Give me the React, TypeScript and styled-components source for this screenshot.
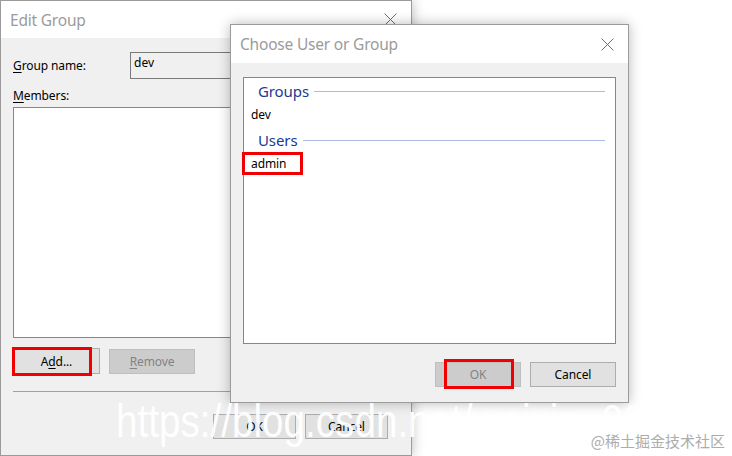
import React from "react";
import styled, { createGlobalStyle } from "styled-components";

const GlobalStyle = createGlobalStyle`
  html, body { margin: 0; padding: 0; background: #ffffff; }
  body { width: 732px; height: 456px; overflow: hidden; font-family: "Noto Sans", "Open Sans", sans-serif; }
`;

const Desktop = styled.div`
  position: relative;
  width: 732px;
  height: 456px;
  overflow: hidden;
  background: #ffffff;
`;

const Window = styled.div<{ $left: number; $top: number; $w: number; $h: number; $z: number }>`
  position: absolute;
  left: ${(p) => p.$left}px;
  top: ${(p) => p.$top}px;
  width: ${(p) => p.$w}px;
  height: ${(p) => p.$h}px;
  z-index: ${(p) => p.$z};
  box-sizing: border-box;
  border: 1px solid #9b9b9b;
  background: #f0f0f0;
  display: flex;
  flex-direction: column;
  box-shadow: 0 0 12px rgba(0, 0, 0, 0.28);
`;

const TitleBar = styled.div<{ $h: number }>`
  height: ${(p) => p.$h}px;
  flex: 0 0 auto;
  background: #ffffff;
  display: flex;
  align-items: center;
  justify-content: space-between;
  padding: 0 14px 0 9px;
`;

const Title = styled.span`
  font-size: 15.5px;
  color: #9b9b9b;
  letter-spacing: -0.2px;
`;

const CloseIcon = () => (
  <svg width="13" height="13" viewBox="0 0 13 13">
    <path d="M0.5 0.5 L12.5 12.5 M12.5 0.5 L0.5 12.5" stroke="#6f6f6f" strokeWidth="1" fill="none" />
  </svg>
);

const Body = styled.div<{ $pad: string }>`
  flex: 1;
  display: flex;
  flex-direction: column;
  padding: ${(p) => p.$pad};
  font-size: 12px;
  color: #000;
`;

const FieldRow = styled.div`
  display: flex;
  align-items: center;
`;

const Label = styled.span<{ $w?: number; $mt?: number }>`
  font-size: 12px;
  width: ${(p) => (p.$w ? `${p.$w}px` : "auto")};
  margin-top: ${(p) => p.$mt || 0}px;
  flex: 0 0 auto;
  letter-spacing: -0.1px;
`;

const U = styled.span`
  text-decoration: underline;
  text-underline-offset: 2px;
`;

const TextInput = styled.div`
  flex: 1;
  height: 27px;
  box-sizing: border-box;
  border: 1px solid #7a7a7a;
  background: #f0f0f0;
  padding: 1px 3px;
  font-size: 12px;
  line-height: 18px;
`;

const ListBox = styled.div<{ $h: number; $mt: number }>`
  height: ${(p) => p.$h}px;
  margin-top: ${(p) => p.$mt}px;
  box-sizing: border-box;
  border: 1px solid #828790;
  background: #ffffff;
  display: flex;
  flex-direction: column;
`;

const ButtonRow = styled.div<{ $mt: number; $justify?: string; $gap: number; $pr?: number; $align?: string }>`
  display: flex;
  align-items: ${(p) => p.$align || "flex-start"};
  margin-top: ${(p) => p.$mt}px;
  justify-content: ${(p) => p.$justify || "flex-start"};
  gap: ${(p) => p.$gap}px;
  padding-right: ${(p) => p.$pr || 0}px;
`;

const Button = styled.div<{ $disabled?: boolean; $w: number; $h: number }>`
  position: relative;
  width: ${(p) => p.$w}px;
  height: ${(p) => p.$h}px;
  box-sizing: border-box;
  border: 1px solid ${(p) => (p.$disabled ? "#bfbfbf" : "#adadad")};
  background: ${(p) => (p.$disabled ? "#cccccc" : "#e1e1e1")};
  color: ${(p) => (p.$disabled ? "#838383" : "#000000")};
  font-size: 12px;
  display: flex;
  align-items: center;
  justify-content: center;
  letter-spacing: -0.1px;
`;

const RedMark = styled.div<{ $l: number; $t: number; $w: number; $h: number }>`
  position: absolute;
  left: ${(p) => p.$l}px;
  top: ${(p) => p.$t}px;
  width: ${(p) => p.$w}px;
  height: ${(p) => p.$h}px;
  box-sizing: border-box;
  border: 3px solid #f00000;
  pointer-events: none;
`;

const Separator = styled.div`
  height: 1px;
  background: #a0a0a0;
  margin-top: 17px;
`;

const GroupHeader = styled.div<{ $mt: number }>`
  display: flex;
  align-items: center;
  margin-top: ${(p) => p.$mt}px;
  padding: 0 10px 0 14px;
  height: 20px;
  &::after {
    content: "";
    flex: 1;
    height: 1px;
    background: #a9bbe4;
    margin-left: 5px;
  }
`;

const HeaderText = styled.span`
  font-size: 15px;
  color: #1a3a94;
  letter-spacing: -0.1px;
`;

const Item = styled.div<{ $mt: number }>`
  position: relative;
  margin-top: ${(p) => p.$mt}px;
  padding-left: 7px;
  height: 20px;
  display: flex;
  align-items: center;
  font-size: 12px;
  letter-spacing: -0.1px;
`;

const Watermark = styled.div`
  position: absolute;
  left: 116px;
  top: 394px;
  z-index: 5;
  font-family: "Liberation Sans", Arial, sans-serif;
  font-size: 46px;
  transform: scaleX(0.84);
  transform-origin: left top;
  color: rgba(255, 255, 255, 0.95);
  white-space: nowrap;
  pointer-events: none;
`;

const Credit = styled.div`
  position: absolute;
  right: 7px;
  bottom: 5px;
  z-index: 6;
  font-family: "Noto Sans CJK SC", "Noto Sans", sans-serif;
  font-size: 15px;
  color: #acacac;
  white-space: nowrap;
`;

export default function App() {
  return (
    <>
      <GlobalStyle />
      <Desktop>
        <Window $left={0} $top={0} $w={412} $h={456} $z={1}>
          <TitleBar $h={37}>
            <Title>Edit Group</Title>
            <CloseIcon />
          </TitleBar>
          <Body $pad="14px 13px 0 12px">
            <FieldRow>
              <Label $w={117}>
                <U>G</U>roup name:
              </Label>
              <TextInput>dev</TextInput>
            </FieldRow>
            <Label $mt={8}>
              <U>M</U>embers:
            </Label>
            <ListBox $h={231} $mt={3} />
            <ButtonRow $mt={10} $gap={9} $align="center">
              <Button $w={87} $h={26}>
                A<U>d</U>d...
                <RedMark $l={-2} $t={-2} $w={80} $h={29} />
              </Button>
              <Button $w={86} $h={25} $disabled>
                <U>R</U>emove
              </Button>
            </ButtonRow>
            <Separator />
            <ButtonRow $mt={22} $gap={9} $justify="flex-end" $pr={10}>
              <Button $w={83} $h={25}>OK</Button>
              <Button $w={83} $h={25}>Cancel</Button>
            </ButtonRow>
          </Body>
        </Window>

        <Window $left={230} $top={24} $w={399} $h={379} $z={2}>
          <TitleBar $h={38}>
            <Title>Choose User or Group</Title>
            <CloseIcon />
          </TitleBar>
          <Body $pad="14px 12px 0 12px">
            <ListBox $h={267} $mt={0}>
              <GroupHeader $mt={3}>
                <HeaderText>Groups</HeaderText>
              </GroupHeader>
              <Item $mt={3}>dev</Item>
              <GroupHeader $mt={6}>
                <HeaderText>Users</HeaderText>
              </GroupHeader>
              <Item $mt={3}>
                admin
                <RedMark $l={-2} $t={-1} $w={61} $h={23} />
              </Item>
            </ListBox>
            <ButtonRow $mt={18} $gap={9} $justify="flex-end" $pr={0}>
              <Button $w={86} $h={25} $disabled>
                OK
                <RedMark $l={8} $t={-4} $w={70} $h={30} />
              </Button>
              <Button $w={86} $h={25}>Cancel</Button>
            </ButtonRow>
          </Body>
        </Window>

        <Watermark>https://blog.csdn.net/weixin_0000</Watermark>
        <Credit>@稀土掘金技术社区</Credit>
      </Desktop>
    </>
  );
}
